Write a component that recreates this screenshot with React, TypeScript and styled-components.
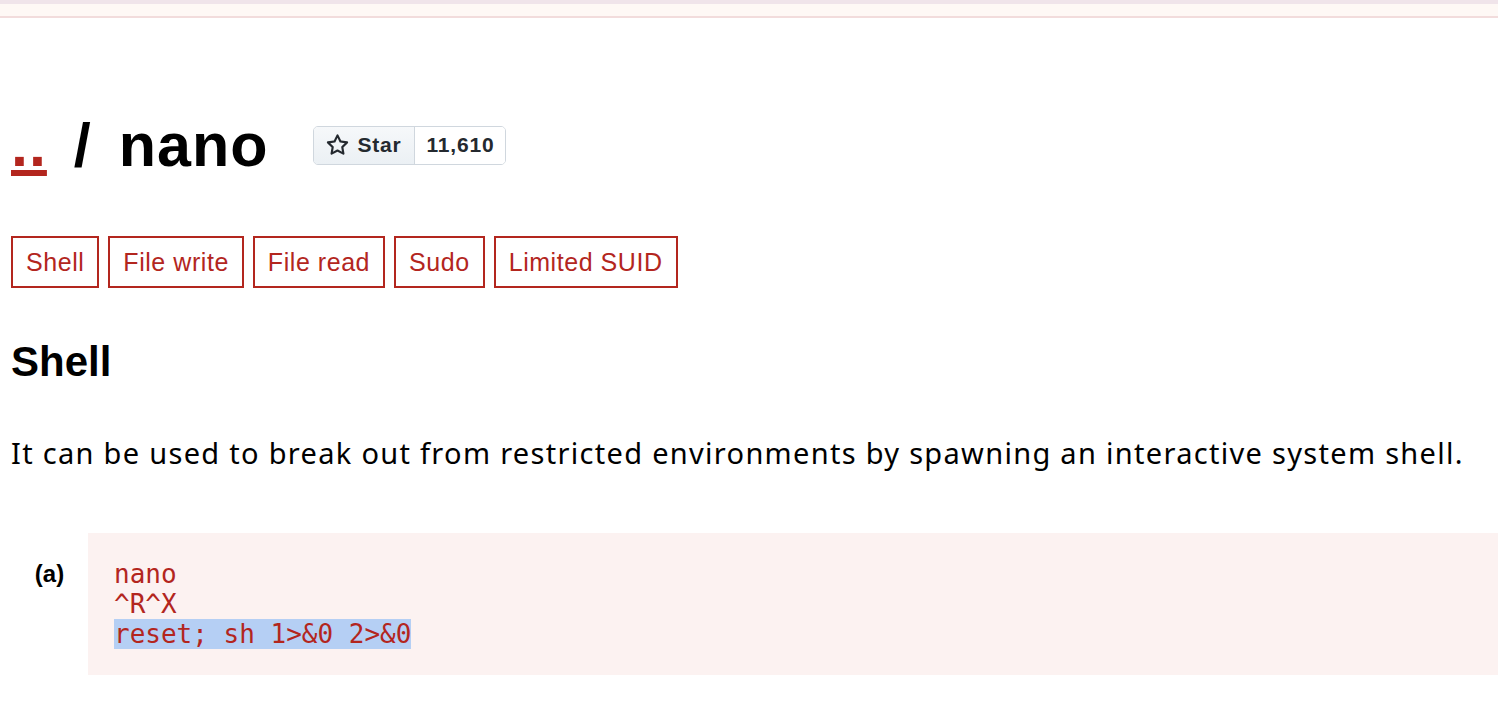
import styled, { createGlobalStyle } from "styled-components";

const GlobalStyle = createGlobalStyle`
  * {
    margin: 0;
    padding: 0;
    box-sizing: border-box;
  }
  body {
    background: #ffffff;
    font-family: "Liberation Sans", Arial, sans-serif;
    color: #000000;
  }
`;

const TopBar = styled.header`
  height: 18px;
  background: #fef8f5;
  border-top: 4px solid #f0e4ea;
  border-bottom: 2px solid #f2dcdc;
`;

const Main = styled.main`
  padding: 91px 0 0 11px;
`;

const TitleRow = styled.div`
  display: flex;
  align-items: center;
`;

const Title = styled.h1`
  font-size: 61px;
  line-height: 72px;
  font-weight: 700;
  white-space: pre;
  word-spacing: 9px;
  letter-spacing: 1px;

  a {
    color: #b3261e;
    text-decoration: underline;
    text-decoration-thickness: 6px;
    text-underline-offset: 4px;
  }
`;

const StarButton = styled.div`
  display: flex;
  margin-left: 45px;
  height: 39px;
  border: 1px solid #d0d7de;
  border-radius: 5px;
  overflow: hidden;
  font-size: 21px;
  font-weight: 700;
  color: #24292f;
  letter-spacing: 0.8px;
`;

const StarLabel = styled.div`
  display: flex;
  align-items: center;
  gap: 8px;
  width: 101px;
  padding-left: 12px;
  background: linear-gradient(#f6f8fa, #ebf0f4);
  border-right: 1px solid #d0d7de;
`;

const StarCount = styled.div`
  display: flex;
  align-items: center;
  justify-content: center;
  width: 90px;
  background: #ffffff;
`;

const TagList = styled.ul`
  display: flex;
  gap: 9px;
  list-style: none;
  margin-top: 55px;
`;

const Tag = styled.li`
  border: 2px solid #b3261e;
  padding: 10px 13px;
  font-size: 25px;
  line-height: 28px;
  letter-spacing: 0.55px;
  color: #b3261e;
`;

const SectionTitle = styled.h2`
  font-size: 42px;
  line-height: 50px;
  font-weight: 700;
  margin-top: 49px;
`;

const Text = styled.p`
  font-family: "Noto Sans", "Liberation Sans", sans-serif;
  font-size: 29px;
  line-height: 43.5px;
  letter-spacing: 1.3px;
  margin-top: 44px;
`;

const Example = styled.div`
  display: flex;
  margin-top: 58px;
`;

const ExampleLabel = styled.div`
  width: 77px;
  padding-top: 26px;
  text-align: center;
  font-size: 24px;
  line-height: 30px;
  font-weight: 700;
`;

const Code = styled.pre`
  flex: 1;
  background: #fcf2f1;
  padding: 26px 26px;
  font-family: "DejaVu Sans Mono", "Liberation Mono", monospace;
  font-size: 26px;
  line-height: 30px;
  color: #b3261e;
`;

const Selected = styled.span`
  background: #b5cff4;
`;

const StarIcon = () => (
  <svg width="23" height="23" viewBox="0 0 16 16" fill="#24292f">
    <path d="M8 .25a.75.75 0 0 1 .673.418l1.882 3.815 4.21.612a.75.75 0 0 1 .416 1.279l-3.046 2.97.719 4.192a.751.751 0 0 1-1.088.791L8 12.347l-3.766 1.98a.75.75 0 0 1-1.088-.79l.72-4.194L.818 6.374a.75.75 0 0 1 .416-1.28l4.21-.611L7.327.668A.75.75 0 0 1 8 .25Zm0 2.445L6.615 5.5a.75.75 0 0 1-.564.41l-3.097.45 2.24 2.184a.75.75 0 0 1 .216.664l-.528 3.084 2.769-1.456a.75.75 0 0 1 .698 0l2.77 1.456-.53-3.084a.75.75 0 0 1 .216-.664l2.24-2.183-3.096-.45a.75.75 0 0 1-.564-.41L8 2.694Z" />
  </svg>
);

const tags = ["Shell", "File write", "File read", "Sudo", "Limited SUID"];

const App = () => {
  return (
    <>
      <GlobalStyle />
      <TopBar />
      <Main>
        <TitleRow>
          <Title>
            <a href="#">..</a> / nano
          </Title>
          <StarButton>
            <StarLabel>
              <StarIcon />
              Star
            </StarLabel>
            <StarCount>11,610</StarCount>
          </StarButton>
        </TitleRow>

        <TagList>
          {tags.map((t) => (
            <Tag key={t}>{t}</Tag>
          ))}
        </TagList>

        <SectionTitle>Shell</SectionTitle>
        <Text>
          It can be used to break out from restricted environments by spawning an interactive system shell.
        </Text>

        <Example>
          <ExampleLabel>(a)</ExampleLabel>
          <Code>
            nano{"\n"}^R^X{"\n"}
            <Selected>reset; sh 1&gt;&amp;0 2&gt;&amp;0</Selected>
          </Code>
        </Example>
      </Main>
    </>
  );
};

export default App;
